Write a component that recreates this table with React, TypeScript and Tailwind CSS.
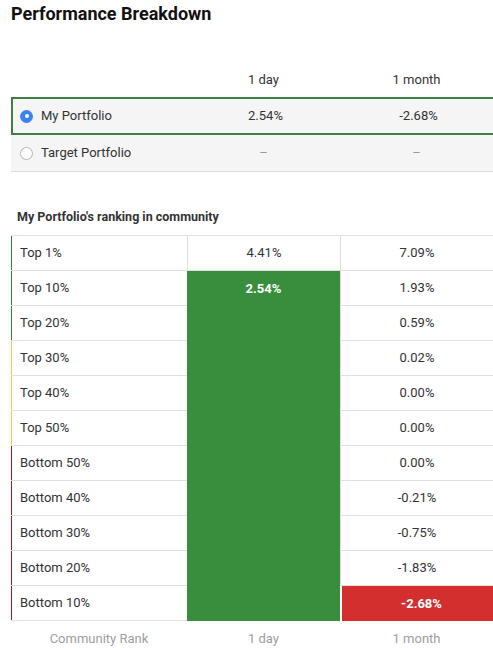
import React from 'react';

const ranks = [
  { label: 'Top 1%', month: '7.09%', tone: 'green' },
  { label: 'Top 10%', month: '1.93%', tone: 'green' },
  { label: 'Top 20%', month: '0.59%', tone: 'green' },
  { label: 'Top 30%', month: '0.02%', tone: 'yellow' },
  { label: 'Top 40%', month: '0.00%', tone: 'yellow' },
  { label: 'Top 50%', month: '0.00%', tone: 'yellow' },
  { label: 'Bottom 50%', month: '0.00%', tone: 'red' },
  { label: 'Bottom 40%', month: '-0.21%', tone: 'red' },
  { label: 'Bottom 30%', month: '-0.75%', tone: 'red' },
  { label: 'Bottom 20%', month: '-1.83%', tone: 'red' },
  { label: 'Bottom 10%', month: '-2.68%', tone: 'red', hit: true },
];

const edge: Record<string, string> = {
  green: 'bg-[#2e7d32]',
  yellow: 'bg-[#f5c842]',
  red: 'bg-[#a31818]',
};

function Radio({ checked }: { checked: boolean }) {
  return checked ? (
    <span className="w-[13px] h-[13px] rounded-full bg-[#3b82f6] flex items-center justify-center">
      <span className="w-[4px] h-[4px] rounded-full bg-white" />
    </span>
  ) : (
    <span className="w-[13px] h-[13px] rounded-full bg-white border border-[#b5b5b5]" />
  );
}

export default function App() {
  return (
    <div className="w-[493px] h-[648px] overflow-hidden bg-white text-[#333] font-['Roboto',sans-serif] pl-[11px]">
      <h1 className="pt-[2px] text-[18px] leading-[24px] font-bold text-[#111]">Performance Breakdown</h1>

      <div className="mt-[36px] w-[490px] text-[13px]">
        <div className="grid grid-cols-[176px_153px_153px] h-[35px] items-center">
          <div />
          <div className="text-center">1 day</div>
          <div className="text-center">1 month</div>
        </div>
        <div className="grid grid-cols-[176px_153px_153px] h-[38px] items-center bg-[#f5f5f5] border-2 border-r-0 border-[#3f7d45]">
          <div className="flex items-center gap-[8px] pl-[7px]">
            <Radio checked />
            <span>My Portfolio</span>
          </div>
          <div className="text-center">2.54%</div>
          <div className="text-center">-2.68%</div>
        </div>
        <div className="grid grid-cols-[176px_153px_153px] h-[37px] items-center bg-[#f5f5f5] border-b border-[#dcdcdc]">
          <div className="flex items-center gap-[8px] pl-[9px]">
            <Radio checked={false} />
            <span>Target Portfolio</span>
          </div>
          <div className="text-center text-[#999]">–</div>
          <div className="text-center text-[#999]">–</div>
        </div>
      </div>

      <h2 className="mt-[36px] pl-[6px] text-[12.5px] leading-[18px] font-bold text-[#333]">
        My Portfolio's ranking in community
      </h2>

      <div className="mt-[9px] w-[490px] grid grid-cols-[176px_153px_161px] grid-rows-[repeat(11,35px)] border-t border-[#e0e0e0] text-[13px]">
        <div className="col-start-2 row-[2/span_10] bg-[#388e3c] text-white font-bold text-center pt-[9px] leading-[18px] border-b border-[#388e3c]">
          2.54%
        </div>
        {ranks.map((r, i) => (
          <React.Fragment key={r.label}>
            <div className="flex items-stretch border-b border-[#e0e0e0]">
              <span className={`w-px ${edge[r.tone]}`} />
              <span className="flex items-center pl-[8px]">{r.label}</span>
            </div>
            {i === 0 && (
              <div className="flex items-center justify-center border-l border-b border-[#e0e0e0]">4.41%</div>
            )}
            {r.hit ? (
              <div className="flex items-center justify-center bg-[#d32f2f] text-white font-bold border-l-2 border-white">
                {r.month}
              </div>
            ) : (
              <div className="flex items-center justify-center border-l border-b border-[#e0e0e0] pr-[8px]">{r.month}</div>
            )}
          </React.Fragment>
        ))}
      </div>

      <div className="grid grid-cols-[176px_153px_153px] h-[35px] items-center text-[13px] text-[#9e9e9e]">
        <div className="text-center">Community Rank</div>
        <div className="text-center">1 day</div>
        <div className="text-center">1 month</div>
      </div>
    </div>
  );
}
